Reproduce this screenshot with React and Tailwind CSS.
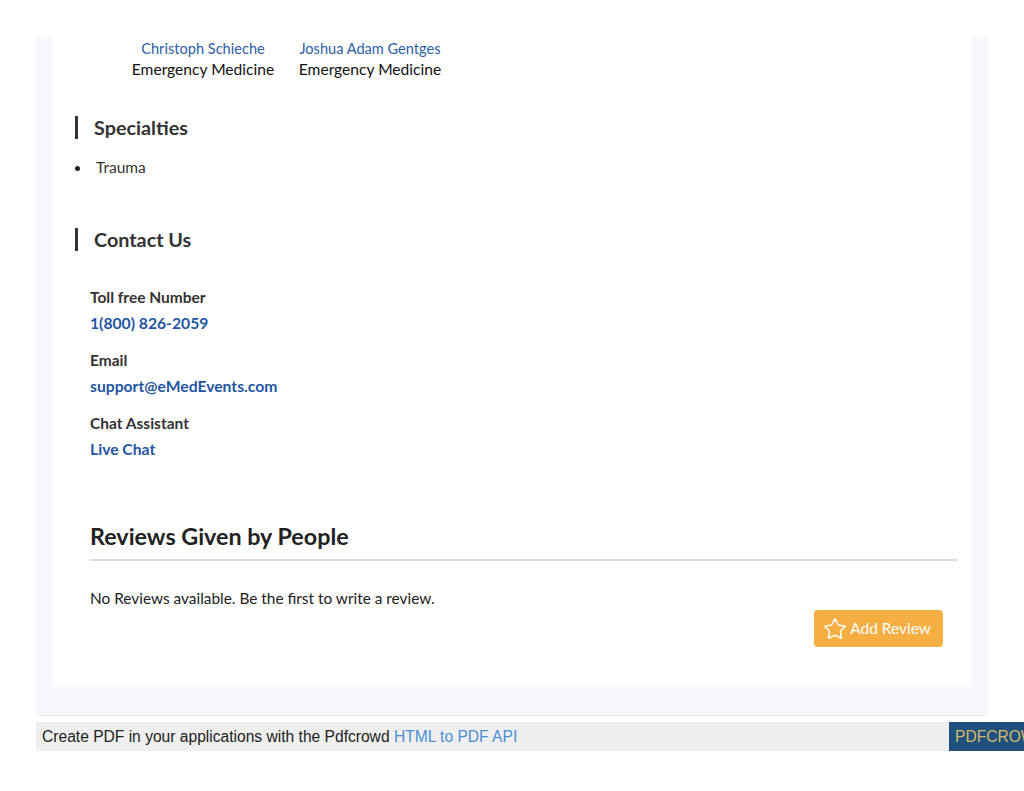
import React from 'react';
import { Star } from 'lucide-react';

const doctors = [
    { name: 'Christoph Schieche', specialty: 'Emergency Medicine' },
    { name: 'Joshua Adam Gentges', specialty: 'Emergency Medicine' },
];

const contacts = [
    { label: 'Toll free Number', value: '1(800) 826-2059' },
    { label: 'Email', value: 'support@eMedEvents.com' },
    { label: 'Chat Assistant', value: 'Live Chat' },
];

const SectionTitle = ({ children, className = '' }) => (
    <div className={`flex items-center h-[23px] border-l-[3px] border-[#333] pl-4 ${className}`}>
        <h3 className="text-[19.8px] leading-[23px] font-bold text-[#333]">{children}</h3>
    </div>
);

const App = () => {
    return (
        <div
            className="w-[1024px] h-[791px] bg-white overflow-hidden pt-[37px]"
            style={{ fontFamily: 'Lato, "Open Sans", sans-serif' }}
        >
            <div className="ml-[36px] w-[952px] bg-[#f7f8fd] px-4 pb-[28px] border-b border-[#e9e9ee]">
                <div className="bg-white rounded-b-md h-[650px] pl-[23px] pr-[15px]">
                    {/* doctors */}
                    <div className="flex gap-[17px] ml-[53px] pt-px">
                        {doctors.map((d) => (
                            <div key={d.name} className="w-[150px] text-center">
                                <div className="text-[14.6px] leading-[21px] text-[#2d5ea8]">{d.name}</div>
                                <div className="text-[15.6px] leading-[21px] text-[#111]">{d.specialty}</div>
                            </div>
                        ))}
                    </div>

                    <SectionTitle className="mt-[36px]">Specialties</SectionTitle>
                    <ul className="mt-[18px]">
                        <li className="flex items-center h-[22px] text-[15.5px] text-[#333]">
                            <span className="w-[5px] h-[5px] rounded-full bg-[#222] mr-[16px]" />
                            Trauma
                        </li>
                    </ul>

                    <SectionTitle className="mt-[49px]">Contact Us</SectionTitle>
                    <div className="pl-[15px] mt-[36px]">
                        {contacts.map((c, i) => (
                            <div key={c.label} className={i > 0 ? 'mt-[17px]' : ''}>
                                <div className="text-[15.5px] leading-[20px] font-bold text-[#333]">{c.label}</div>
                                <div className="mt-[6px] text-[15.7px] leading-[20px] font-bold text-[#1f56a3]">{c.value}</div>
                            </div>
                        ))}
                    </div>

                    {/* reviews */}
                    <div className="pl-[15px] mt-[62px]">
                        <h2 className="text-[23.3px] leading-[30px] font-bold text-[#222] pb-[8px] border-b-2 border-[#dcdcdc]">
                            Reviews Given by People
                        </h2>
                        <p className="mt-[27px] text-[15.4px] leading-[20px] text-[#222]">
                            No Reviews available. Be the first to write a review.
                        </p>
                        <div className="flex justify-end mt-[2px] pr-[14px]">
                            <button className="flex items-center gap-[3px] h-[37px] pl-[9px] pr-[12px] bg-[#f5ae42] rounded text-white text-[15.5px]">
                                <Star size={24} strokeWidth={1.5} />
                                Add Review
                            </button>
                        </div>
                    </div>
                </div>
            </div>

            {/* pdf footer */}
            <div
                className="mt-[6px] ml-[36px] h-[29px] flex items-center justify-between bg-[#efefef] text-[15.6px]"
                style={{ fontFamily: '"Liberation Sans", Arial, sans-serif' }}
            >
                <span className="pl-[6px] text-[#222]">
                    Create PDF in your applications with the Pdfcrowd{' '}
                    <span className="text-[#4a8fd6]">HTML to PDF API</span>
                </span>
                <span className="h-full w-[75px] bg-[#1e5180] text-[#d9b865] pl-[6px] flex items-center whitespace-nowrap overflow-hidden">
                    PDFCROWD
                </span>
            </div>
        </div>
    );
};

export default App;
